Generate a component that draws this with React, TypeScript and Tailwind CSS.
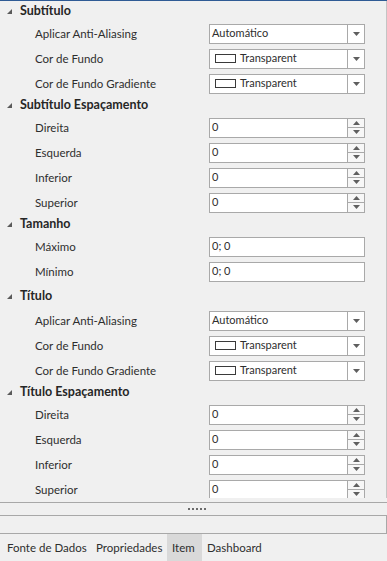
import React from 'react';

type Row = { label: string; kind: 'combo' | 'color' | 'spin' | 'text'; value?: string };
type Section = { title: string; tall?: boolean; rows: Row[] };

const appearance: Row[] = [
  { label: 'Aplicar Anti-Aliasing', kind: 'combo', value: 'Automático' },
  { label: 'Cor de Fundo', kind: 'color' },
  { label: 'Cor de Fundo Gradiente', kind: 'color' },
];

const spacing: Row[] = [
  { label: 'Direita', kind: 'spin', value: '0' },
  { label: 'Esquerda', kind: 'spin', value: '0' },
  { label: 'Inferior', kind: 'spin', value: '0' },
  { label: 'Superior', kind: 'spin', value: '0' },
];

const sections: Section[] = [
  { title: 'Subtítulo', rows: appearance },
  { title: 'Subtítulo Espaçamento', rows: spacing },
  {
    title: 'Tamanho',
    rows: [
      { label: 'Máximo', kind: 'text', value: '0; 0' },
      { label: 'Mínimo', kind: 'text', value: '0; 0' },
    ],
  },
  { title: 'Título', tall: true, rows: appearance },
  { title: 'Título Espaçamento', rows: spacing },
];

const tabs = [
  { name: 'Fonte de Dados', w: 'w-[89px]' },
  { name: 'Propriedades', w: 'w-[76px]' },
  { name: 'Item', w: 'w-[35px]', active: true },
  { name: 'Dashboard', w: 'w-auto' },
];

const DownArrow = () => (
  <svg width="7" height="4" viewBox="0 0 7 4">
    <polygon points="0,0 7,0 3.5,4" fill="#5f5f5f" />
  </svg>
);

const UpArrow = () => (
  <svg width="7" height="4" viewBox="0 0 7 4">
    <polygon points="3.5,0 7,4 0,4" fill="#5f5f5f" />
  </svg>
);

const Editor = ({ row }: { row: Row }) => {
  if (row.kind === 'combo' || row.kind === 'color') {
    return (
      <div className="flex h-[20px] w-[156px] border border-[#a9a9a9] bg-white">
        <div className="flex flex-1 items-center pl-[2px]">
          {row.kind === 'color' && (
            <span className="ml-[3px] mr-[4px] h-[9px] w-[21px] border border-[#3a3a3a] bg-white" />
          )}
          <span>{row.kind === 'color' ? 'Transparent' : row.value}</span>
        </div>
        <div className="flex w-[17px] items-center justify-center border-l border-[#a9a9a9]">
          <DownArrow />
        </div>
      </div>
    );
  }
  if (row.kind === 'spin') {
    return (
      <div className="flex h-[20px] w-[156px] border border-[#a9a9a9] bg-white">
        <div className="flex flex-1 items-center pl-[2px]">{row.value}</div>
        <div className="flex w-[17px] flex-col border-l border-[#a9a9a9] bg-[#f7f7f7]">
          <div className="flex flex-1 items-center justify-center border-b border-[#a9a9a9]">
            <UpArrow />
          </div>
          <div className="flex flex-1 items-center justify-center">
            <DownArrow />
          </div>
        </div>
      </div>
    );
  }
  return (
    <div className="flex h-[20px] w-[156px] items-center border border-[#a9a9a9] bg-white pl-[2px]">
      {row.value}
    </div>
  );
};

export default function App() {
  return (
    <div
      className="flex h-[561px] w-[387px] flex-col overflow-hidden bg-[#f0f0f0] text-[11px] text-[#2e2e2e]"
      style={{ fontFamily: 'Lato, "Liberation Sans", sans-serif' }}
    >
      <div className="h-[1px] bg-[#2f5b95]" />

      {/* property grid */}
      <div className="h-[497px] overflow-hidden border-r border-[#c4c4c4] pt-[1px]">
        {sections.map(section => (
          <div key={section.title}>
            <div
              className={`flex items-center pl-[7px] text-[12.5px] font-bold text-[#262626] ${section.tall ? 'h-[24px]' : 'h-[19px]'}`}
            >
              <svg width="5" height="5" viewBox="0 0 5 5" className="mr-[8px]">
                <polygon points="5,0 5,5 0,5" fill="#5a5a5a" />
              </svg>
              {section.title}
            </div>
            {section.rows.map(row => (
              <div key={row.label} className="flex h-[25px] items-center">
                <div className="w-[209px] pl-[35px] text-[11.5px]">{row.label}</div>
                <Editor row={row} />
              </div>
            ))}
          </div>
        ))}
      </div>

      {/* splitter */}
      <div className="h-[4px]" />
      <div className="flex h-[13px] items-center justify-center border-t border-[#a8a8a8] pl-[7px]">
        <div className="flex gap-[2px]">
          {[0, 1, 2, 3, 4].map(i => (
            <span key={i} className="h-[2px] w-[2px] bg-[#6b6b6b]" />
          ))}
        </div>
      </div>
      <div className="h-[19px] border-y border-r border-[#a8a8a8]" />

      {/* tabs */}
      <div className="flex h-[27px] pl-[2px] text-[11.5px]">
        {tabs.map(tab => (
          <div
            key={tab.name}
            className={`flex shrink-0 items-center whitespace-nowrap px-[5px] ${tab.w} ${tab.active ? 'bg-[#d9d9d9]' : ''}`}
          >
            {tab.name}
          </div>
        ))}
      </div>
    </div>
  );
}
